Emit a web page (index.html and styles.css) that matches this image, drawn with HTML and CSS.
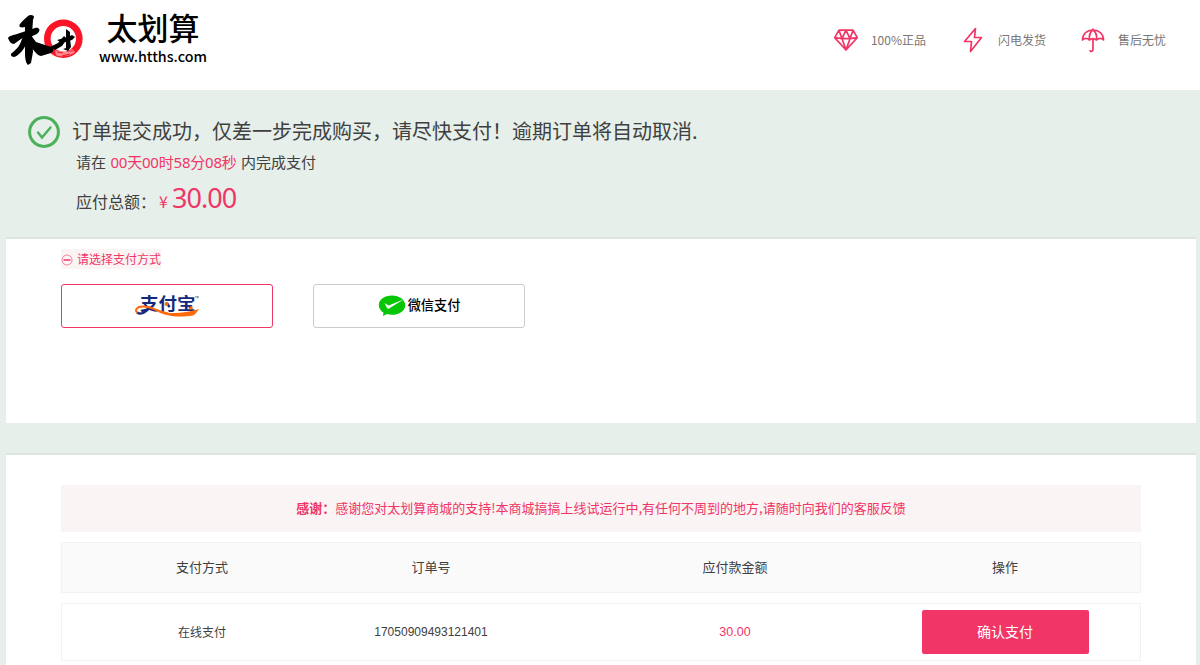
FILE: index.html
```html
<!DOCTYPE html>
<html lang="zh-CN">
<head>
<meta charset="utf-8">
<title>太划算 - 订单支付</title>
<link rel="stylesheet" href="styles.css">
</head>
<body>
<header class="header">
  <div class="brand">
    <svg class="brand-mark" viewBox="0 0 76 52" width="76" height="52">
      <circle cx="55.300" cy="24.700" r="16" fill="none" stroke="#fa1426" stroke-width="6.600"/>
      <path d="M47 36c4 2 12 2 17-1l3 3c-4 4-14 6-19 3z" fill="#fff" opacity=".5"/>
      <path d="M49 38l6 1M54 42l8-2M59 37l6 0" stroke="#fa1426" stroke-width="1.200"/>
      <path d="M20 2c2-2 6-1 6 1-1 4-4 9-9 10-4 1-7 0-5-3 2-3 5-5 8-8z"/>
      <path d="M0 24c1-2 5-3 9-4l18-6c4-1 6 2 3 5-3 3-11 4-17 6l-7 5c-3 0-5-3-6-6z"/>
      <path d="M17 9l8-3-1 14 1 18-2 11-3 2c-3-3-3-9-3-15z"/>
      <path d="M18 21l0 9c-2 6-8 12-12 13-3 0-4-3-2-4 6-5 8-8 10-14z"/>
      <path d="M22 20l6 8 15 5c3 1 3 5 0 6l-10 3c-5-1-8-7-12-12z"/>
      <path d="M49 26l11-3 4-2 3 2-3 3-10 3z"/>
      <path d="M58 15l4 3 0 7 1 8-3 4-5-2 3-1 0-8z"/>
      <path d="M56 22l3 3-5 7-7 4-5-3 8-4z"/>
    </svg>
    <div class="brand-text">
      <div class="brand-name">太划算</div>
      <div class="brand-url">www.htths.com</div>
    </div>
  </div>
  <ul class="promises">
    <li class="promise promise-genuine">
      <svg viewBox="0 0 26 24" width="26" height="24"><path d="M6 2.200h14l4.300 7.500L13 22 1.700 9.700zM1.700 9.700L9 10.700h8l7.300-1M6 2.200l3 8.500 4-8.500 4 8.500 3-8.500M9 10.700L13 22l4-11.300"/></svg>
      <span>100%正品</span>
    </li>
    <li class="promise promise-fast">
      <svg viewBox="0 0 20 26" width="20" height="26"><path d="M12.500 1.500L1.500 14.500h7l-1 10 11-14H11.500z"/></svg>
      <span>闪电发货</span>
    </li>
    <li class="promise promise-service">
      <svg viewBox="0 0 24 26" width="24" height="26"><path d="M12 1.500V3M1.500 13C1.500 7 6 3 12 3s10.500 4 10.500 10c-2-2-4.500-2-7 0-2-1.500-5-1.500-7 0-2.500-2-5-2-7 0zM8.500 13C8 9 9 5 12 3c3 2 4 6 3.500 10M12 12v10.500c0 2.500-3 2.500-3 .5"/></svg>
      <span>售后无忧</span>
    </li>
  </ul>
</header>

<main class="page">
  <section class="notice">
    <svg class="notice-icon" viewBox="0 0 32 32" width="32" height="32"><circle cx="16" cy="16" r="14.400"/><path d="M10 16.500l4 5L22.500 11.500"/></svg>
    <div class="notice-body">
      <h1 class="notice-title">订单提交成功，仅差一步完成购买，请尽快支付！逾期订单将自动取消.</h1>
      <p class="countdown">请在 <em>00天00时58分08秒</em> 内完成支付</p>
      <p class="total">应付总额：<span class="currency">¥</span><span class="amount">30.00</span></p>
    </div>
  </section>

  <section class="panel methods-panel">
    <div class="hint">
      <svg viewBox="0 0 12 12" width="12" height="12"><circle cx="6" cy="6" r="5"/><path d="M2.500 6h7"/></svg>
      <span>请选择支付方式</span>
    </div>
    <div class="methods">
      <div class="method method-active">
        <div class="alipay">
          <span class="alipay-name">支付宝</span>
          <svg class="alipay-swoosh" viewBox="0 0 68 26" width="68" height="26">
            <path d="M17 14C13 19 8 22 4 19.500" fill="none" stroke="#13297d" stroke-width="2.200"/>
            <path d="M4.500 20C1 17 4 13.500 10 13.500c9 0 14 5 25 7" fill="none" stroke="#ff6a0b" stroke-width="1.900"/>
            <path d="M18 15c10 6 29 7 48 1-2 3-3 5-6 6.500-12 2-29 2-42-7.500z" fill="#ff6a0b"/>
            <circle cx="33.500" cy="11" r="2" fill="#ff6a0b"/><circle cx="58" cy="15" r="1.700" fill="#ff6a0b"/>
          </svg>
          <span class="alipay-tm">™</span>
        </div>
      </div>
      <div class="method">
        <svg viewBox="0 0 28 22" width="28" height="22"><path d="M14 .5C6.500.5.800 4.700.800 10c0 3.200 1.900 5.900 4.700 7.700l-.5 3.300 4-2c1.600.5 3.200.8 5 .8 7.500 0 13.200-4.200 13.200-9.600S21.500.5 14 .5z" fill="#07c507"/><path d="M6.500 8l4.200 2.500L26 4.200 11 13.500c-1 .5-1.700.1-2.100-.8z" fill="#fff"/></svg>
        <span class="wechat-name">微信支付</span>
      </div>
    </div>
  </section>

  <section class="panel order-panel">
    <p class="thanks"><strong>感谢：</strong>感谢您对太划算商城的支持!本商城搞搞上线试运行中,有任何不周到的地方,请随时向我们的客服反馈</p>
    <div class="row row-head">
      <span>支付方式</span><span>订单号</span><span>应付款金额</span><span>操作</span>
    </div>
    <div class="row row-order">
      <span class="channel">在线支付</span><span>17050909493121401</span><span class="price">30.00</span><button class="confirm" type="button">确认支付</button>
    </div>
  </section>
</main>
</body>
</html>
```
FILE: styles.css
```css
* { box-sizing: border-box; }
body {
  margin: 0;
  height: 665px;
  overflow: hidden;
  background: #e6efea;
  color: #404040;
  font-family: "Noto Sans CJK SC", sans-serif;
}
h1, p, ul { margin: 0; padding: 0; font-weight: 400; }
svg { flex: none; display: block; }

.header {
  display: flex;
  justify-content: space-between;
  height: 90px;
  padding: 0 34px 0 8px;
  background: #fff;
}
.brand { display: flex; color: #000; }
.brand-mark { margin-top: 14px; }
.brand-text { display: flex; flex-direction: column; align-items: center; margin-left: 15px; padding-top: 7px; }
.brand-name { font-size: 31px; font-weight: 500; line-height: 40px; }
.brand-url { font-size: 14.300px; font-weight: 500; line-height: 18px; }

.promises { display: flex; list-style: none; height: 80px; align-items: center; color: #777; font-size: 12px; }
.promise { display: flex; align-items: center; }
.promise span { margin-top: -2px; }
.promise svg { fill: none; stroke: #f13567; stroke-width: 1.700; stroke-linejoin: round; }
.promise-genuine { gap: 12px; }
.promise-fast { gap: 15px; margin-left: 37px; }
.promise-service { gap: 13px; margin-left: 35px; }

.notice { display: flex; gap: 12px; height: 147px; padding: 26px 28px 0; }
.notice-icon { fill: none; stroke: #4bb05a; stroke-width: 3; stroke-linecap: round; }
.notice-icon path { stroke-width: 2.400; }
.notice-title { font-size: 20px; line-height: 30px; }
.countdown { padding-left: 4px; margin-top: 5px; font-size: 15px; line-height: 22px; }
.countdown em {
  margin: 0 1px;
  color: #f13567;
  font-family: "Noto Sans", "Noto Sans CJK SC", sans-serif;
  font-style: normal;
  letter-spacing: -.2px;
}
.total { padding-left: 4px; margin-top: 8px; font-size: 16px; line-height: 34px; }
.currency { margin: 0 4px 0 3px; color: #f13567; }
.amount { color: #f13567; font-family: "Noto Sans", sans-serif; font-size: 27px; letter-spacing: -.9px; }

.panel { margin: 0 4px 0 6px; padding: 0 55px; border-top: 2px solid #dee4e1; background: #fff; }
.methods-panel { height: 186px; padding-top: 10px; }
.order-panel { height: 220px; margin-top: 30px; padding-top: 30px; }
.hint {
  display: flex;
  align-items: center;
  gap: 4px;
  width: 100px;
  height: 20px;
  background: #faf4f4;
  color: #f13567;
  font-size: 12px;
  line-height: 18px;
  white-space: nowrap;
}
.hint span { margin-top: -1px; }
.hint svg { margin-top: 1px; fill: none; stroke: #f13567; stroke-width: .6; }
.hint svg path { stroke-width: 1.500; }
.methods { display: flex; gap: 40px; margin-top: 15px; }
.method {
  display: flex;
  align-items: center;
  justify-content: center;
  width: 212px;
  height: 44px;
  border: 1px solid #ccc;
  border-radius: 3px;
}
.method-active { border-color: #f13567; }
.alipay { position: relative; width: 68px; height: 26px; }
.alipay-name {
  position: absolute;
  left: 7px;
  top: 0;
  color: #13297d;
  font-size: 18.500px;
  font-weight: 700;
  line-height: 20px;
  white-space: nowrap;
  transform: scaleY(.9);
}
.alipay-swoosh { position: absolute; left: 0; top: 0; }
.alipay-tm { position: absolute; left: 62px; top: 2px; font-size: 5px; line-height: 5px; }
.wechat-name { margin: -4px 0 0 2px; color: #000; font-size: 13.200px; font-weight: 500; }

.thanks { height: 47px; background: #faf4f4; color: #f13567; font-size: 13px; line-height: 45px; text-align: center; }
.row {
  display: grid;
  grid-template-columns: 180px 278px 330px 210px;
  align-items: center;
  justify-items: center;
  margin-top: 10px;
  padding: 0 30px 0 50px;
  border: 1px solid #f2f2f2;
}
.row-head { height: 51px; padding-bottom: 2px; background: #fafafa; font-size: 13px; }
.row-order { height: 58px; font-family: "Liberation Sans", "Noto Sans CJK SC", sans-serif; font-size: 12px; }
.channel { margin-top: -2px; }
.price { color: #f13567; font-size: 12.500px; }
.confirm { width: 167px; height: 44px; padding: 0 0 2px; border: 0; border-radius: 2px; background: #f13567; color: #fff; font-family: inherit; font-size: 14px; }
```
